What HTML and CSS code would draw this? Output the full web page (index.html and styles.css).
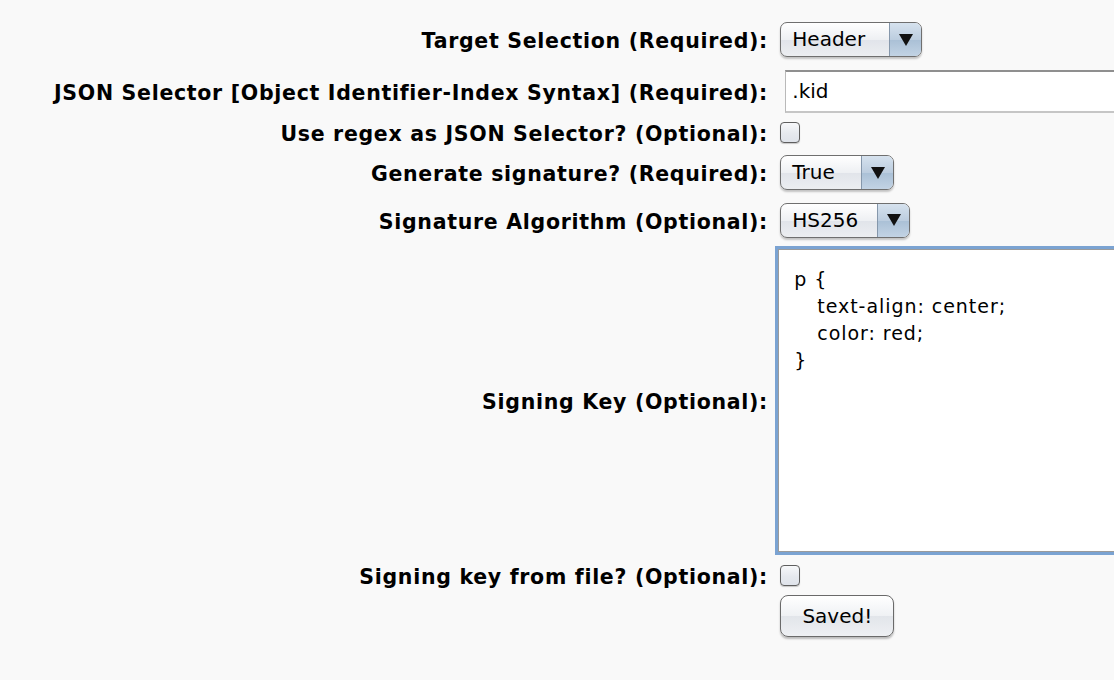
FILE: index.html
```html
<!DOCTYPE html>
<html>
<head>
<meta charset="utf-8">
<link rel="stylesheet" href="styles.css">
</head>
<body>
<form class="form">
  <div class="row r1">
    <label class="lbl">Target Selection (Required):</label>
    <div class="combo w-header"><span class="combo-text">Header</span><span class="combo-arrow"><span class="tri"></span></span></div>
  </div>
  <div class="row r2">
    <label class="lbl">JSON Selector [Object Identifier-Index Syntax] (Required):</label>
    <div class="field">.kid</div>
  </div>
  <div class="row r3">
    <label class="lbl">Use regex as JSON Selector? (Optional):</label>
    <span class="check"></span>
  </div>
  <div class="row r4">
    <label class="lbl">Generate signature? (Required):</label>
    <div class="combo w-true"><span class="combo-text">True</span><span class="combo-arrow"><span class="tri"></span></span></div>
  </div>
  <div class="row r5">
    <label class="lbl">Signature Algorithm (Optional):</label>
    <div class="combo w-hs"><span class="combo-text">HS256</span><span class="combo-arrow"><span class="tri"></span></span></div>
  </div>
  <div class="row r6">
    <label class="lbl">Signing Key (Optional):</label>
    <div class="area">
      <div class="line">p {</div>
      <div class="line indent">text-align: center;</div>
      <div class="line indent">color: red;</div>
      <div class="line">}</div>
    </div>
  </div>
  <div class="row r7">
    <label class="lbl">Signing key from file? (Optional):</label>
    <span class="check"></span>
  </div>
  <div class="row r8">
    <span class="lbl"></span>
    <button type="button" class="btn">Saved!</button>
  </div>
</form>
</body>
</html>
```
FILE: styles.css
```css
html, body {
  margin: 0;
  padding: 0;
  background: #f9f9f9;
  overflow: hidden;
}
body {
  width: 1114px;
  height: 680px;
  font-family: "DejaVu Sans", Verdana, sans-serif;
  color: #000;
}
.form {
  display: flex;
  flex-direction: column;
  padding-top: 22px;
}
.row {
  display: flex;
  align-items: center;
  gap: 13px;
}
.lbl {
  flex: 0 0 768px;
  text-align: right;
  font-weight: bold;
  font-size: 20.5px;
  line-height: 20px;
  letter-spacing: 0.7px;
  white-space: nowrap;
  padding-top: 3px;
  margin-right: -0.7px;
}
.r1 { height: 35px; }
.r2 { height: 43px; margin-top: 13px; }
.r3 { height: 21px; margin-top: 9px; }
.r4 { height: 35px; margin-top: 12px; }
.r5 { height: 36px; margin-top: 12px; }
.r6 { height: 309px; margin-top: 8px; gap: 8px; }
.r7 { height: 21px; margin-top: 10px; }
.r8 { height: 42px; margin-top: 9px; }

/* combo box */
.combo {
  display: flex;
  height: 33px;
  border: 1px solid #6f6f6f;
  border-radius: 7px;
  background: linear-gradient(#ffffff, #eef0f3 50%, #e1e4ea 51%, #eceef1);
  box-shadow: 0 2px 2px rgba(0,0,0,0.22);
  overflow: hidden;
  box-sizing: content-box;
}
.w-header { width: 140px; }
.w-true { width: 112px; }
.w-hs { width: 128px; }
.combo-text {
  flex: 1;
  padding-left: 11px;
  font-size: 20px;
  line-height: 33px;
}
.combo-arrow {
  flex: 0 0 31px;
  border-left: 1px solid #8597ab;
  background: linear-gradient(#d6e2ee, #bccddf 50%, #aac0d6 51%, #c2d3e4);
  display: flex;
  align-items: center;
  justify-content: center;
}
.tri {
  width: 0;
  height: 0;
  border-left: 7px solid transparent;
  border-right: 7px solid transparent;
  border-top: 12px solid #111;
}

/* text field */
.field {
  flex: 1;
  margin-left: 5px;
  height: 39px;
  background: #fff;
  border-top: 2px solid #8f8f8f;
  border-left: 1px solid #b9b9b9;
  border-bottom: 2px solid #c6c6c6;
  font-size: 20px;
  line-height: 39px;
  padding-left: 6px;
}

/* checkbox */
.check {
  width: 18px;
  height: 19px;
  border: 1px solid #5e5e5e;
  border-radius: 4px;
  background: linear-gradient(#f7f8fa, #e6e9ee 55%, #dfe3ea);
  box-shadow: 0 1px 1px rgba(0,0,0,0.2);
}

/* text area */
.area {
  flex: 1;
  box-sizing: border-box;
  height: 309px;
  background: #fff;
  border: 3px solid #7ba3d2;
  border-right: none;
  box-shadow: inset 1px 1px 0 #9b9b9b, inset 0 -1px 0 #9b9b9b;
  padding: 17px 0 0 16px;
  font-size: 19px;
  letter-spacing: 0.95px;
  line-height: 27px;
}
.indent { padding-left: 23px; }

/* button */
.btn {
  width: 114px;
  height: 42px;
  border: 1px solid #6a6a6a;
  border-radius: 8px;
  background: linear-gradient(#ffffff, #eff1f4 50%, #e2e5ea 51%, #eef0f3);
  box-shadow: 0 2px 2px rgba(0,0,0,0.25);
  font-family: "DejaVu Sans", Verdana, sans-serif;
  font-size: 20px;
  color: #000;
  padding: 0;
}
```
